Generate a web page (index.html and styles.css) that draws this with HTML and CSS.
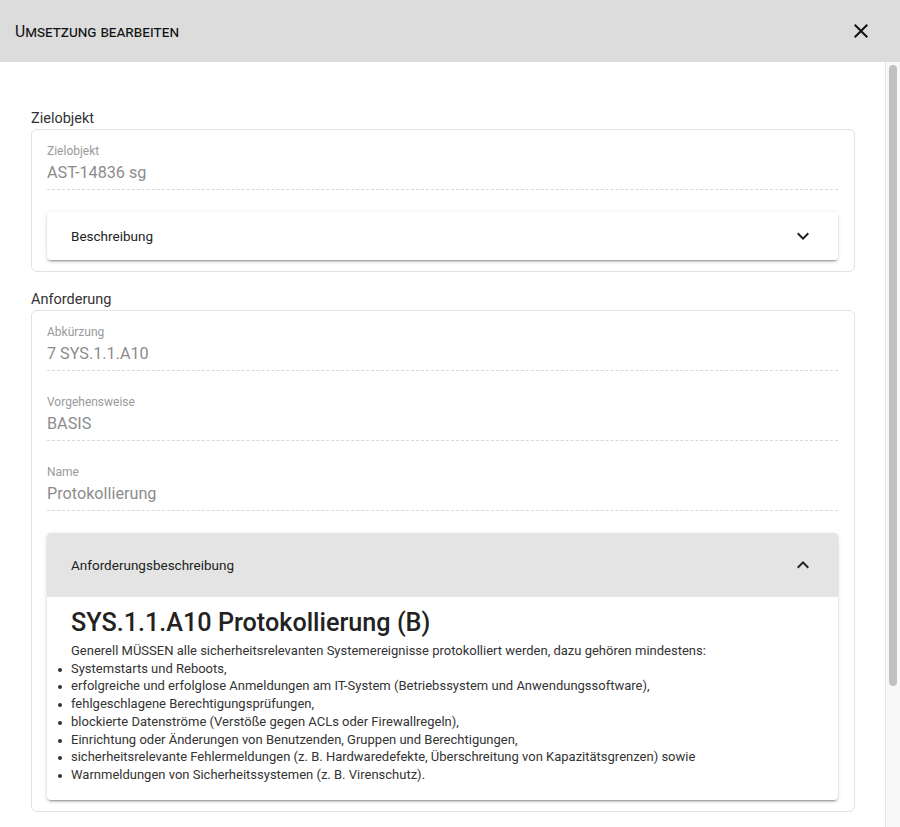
FILE: index.html
```html
<!DOCTYPE html>
<html lang="de">
<head>
<meta charset="utf-8">
<title>Umsetzung bearbeiten</title>
<link rel="stylesheet" href="styles.css">
</head>
<body>
<div class="dialog">
  <header class="dlg-header">
    <h2 class="dlg-title">Umsetzung bearbeiten</h2>
    <button class="close-btn" aria-label="Schließen">
      <svg viewBox="0 0 24 24" width="24" height="24"><path d="M19 6.41 17.59 5 12 10.59 6.41 5 5 6.41 10.59 12 5 17.59 6.41 19 12 13.41 17.59 19 19 17.59 13.41 12z" fill="#111"/></svg>
    </button>
  </header>
  <div class="dlg-body">
    <main class="dlg-content">
      <div class="section-label">Zielobjekt</div>
      <section class="card">
        <div class="field">
          <div class="field-label">Zielobjekt</div>
          <div class="field-value">AST-14836 sg</div>
        </div>
        <div class="panel">
          <div class="panel-header">
            <span class="panel-title">Beschreibung</span>
            <svg class="chev" viewBox="0 0 24 24" width="24" height="24"><path d="M7.41 8.59 12 13.17l4.59-4.58L18 10l-6 6-6-6z" fill="#222"/></svg>
          </div>
        </div>
      </section>

      <div class="section-label">Anforderung</div>
      <section class="card">
        <div class="field">
          <div class="field-label">Abkürzung</div>
          <div class="field-value">7 SYS.1.1.A10</div>
        </div>
        <div class="field">
          <div class="field-label">Vorgehensweise</div>
          <div class="field-value">BASIS</div>
        </div>
        <div class="field">
          <div class="field-label">Name</div>
          <div class="field-value">Protokollierung</div>
        </div>
        <div class="panel expanded">
          <div class="panel-header">
            <span class="panel-title">Anforderungsbeschreibung</span>
            <svg class="chev" viewBox="0 0 24 24" width="24" height="24"><path d="M7.41 15.41 12 10.83l4.59 4.58L18 14l-6-6-6 6z" fill="#222"/></svg>
          </div>
          <div class="panel-body">
            <h1 class="req-title">SYS.1.1.A10 Protokollierung (B)</h1>
            <p class="req-text">Generell MÜSSEN alle sicherheitsrelevanten Systemereignisse protokolliert werden, dazu gehören mindestens:</p>
            <ul class="req-list">
              <li>Systemstarts und Reboots,</li>
              <li>erfolgreiche und erfolglose Anmeldungen am IT-System (Betriebssystem und Anwendungssoftware),</li>
              <li>fehlgeschlagene Berechtigungsprüfungen,</li>
              <li>blockierte Datenströme (Verstöße gegen ACLs oder Firewallregeln),</li>
              <li>Einrichtung oder Änderungen von Benutzenden, Gruppen und Berechtigungen,</li>
              <li>sicherheitsrelevante Fehlermeldungen (z. B. Hardwaredefekte, Überschreitung von Kapazitätsgrenzen) sowie</li>
              <li>Warnmeldungen von Sicherheitssystemen (z. B. Virenschutz).</li>
            </ul>
          </div>
        </div>
      </section>
    </main>
    <div class="scrollbar"><div class="thumb"></div></div>
  </div>
</div>
</body>
</html>
```
FILE: styles.css
```css
* { box-sizing: border-box; }
html, body { margin: 0; padding: 0; height: 100%; }
body {
  font-family: Roboto, "Liberation Sans", Arial, sans-serif;
  background: #fff;
  color: #222;
  overflow: hidden;
}
.dialog {
  width: 900px;
  height: 827px;
  display: flex;
  flex-direction: column;
}
.dlg-header {
  flex: 0 0 62px;
  background: #dcdcdc;
  display: flex;
  align-items: center;
  justify-content: space-between;
  padding: 0 27px 0 15px;
}
.dlg-title {
  margin: 0;
  font-size: 15.7px;
  font-weight: 400;
  font-variant: small-caps;
  color: #111;
  padding-top: 1px;
}
.close-btn {
  border: 0;
  background: transparent;
  padding: 0;
  width: 24px;
  height: 24px;
  display: flex;
  cursor: pointer;
}
.dlg-body {
  flex: 1 1 auto;
  display: flex;
  min-height: 0;
}
.dlg-content {
  flex: 1 1 auto;
  overflow: hidden;
  padding: 47px 30px 0 31px;
}
.scrollbar {
  flex: 0 0 15px;
  background: #f8f8f8;
  border-left: 1px solid #e6e6e6;
  padding: 3px 3px 0 3px;
}
.thumb {
  height: 621px;
  background: #c1c1c1;
  border-radius: 4px;
}
.section-label {
  font-size: 14.5px;
  line-height: 20px;
  color: #333;
}
.card + .section-label { margin-top: 18px; }
.card {
  border: 1px solid #e2e2e2;
  border-radius: 6px;
  padding: 14px 16px 11px 15px;
  display: flex;
  flex-direction: column;
}
.field {
  border-bottom: 1px dashed #d8d8d8;
  padding-bottom: 6px;
}
.field + .field { margin-top: 24px; }
.field-label {
  font-size: 12px;
  line-height: 15px;
  color: #9a9a9a;
  margin-bottom: 4px;
}
.field-value {
  font-size: 16.2px;
  line-height: 20px;
  color: #8c8c8c;
}
.field + .panel { margin-top: 22px; }
.panel {
  background: #fff;
  border-radius: 4px;
  box-shadow: 0 3px 1px -2px rgba(0,0,0,.2), 0 2px 2px 0 rgba(0,0,0,.14), 0 1px 5px 0 rgba(0,0,0,.12);
  overflow: hidden;
}
.panel-header {
  height: 48px;
  display: flex;
  align-items: center;
  justify-content: space-between;
  padding: 0 23px 0 24px;
}
.panel.expanded .panel-header {
  height: 64px;
  background: #e4e4e4;
}
.panel-title {
  font-size: 13.5px;
  color: #222;
}
.chev { display: block; }
.panel-body {
  padding: 11px 24px 16px 24px;
  color: #333;
}
.req-title {
  margin: 0 0 4px;
  font-size: 25.2px;
  line-height: 30px;
  font-weight: 500;
  color: #222;
}
.req-text {
  margin: 0;
  font-size: 13px;
  line-height: 17.7px;
}
.req-list {
  margin: 0;
  padding-left: 0;
  list-style: none;
  font-size: 13px;
  line-height: 17.7px;
}
.req-list li { position: relative; }
.req-list li::before {
  content: "";
  position: absolute;
  left: -13px;
  top: 8px;
  width: 4px;
  height: 4px;
  border-radius: 50%;
  background: #333;
}
```
